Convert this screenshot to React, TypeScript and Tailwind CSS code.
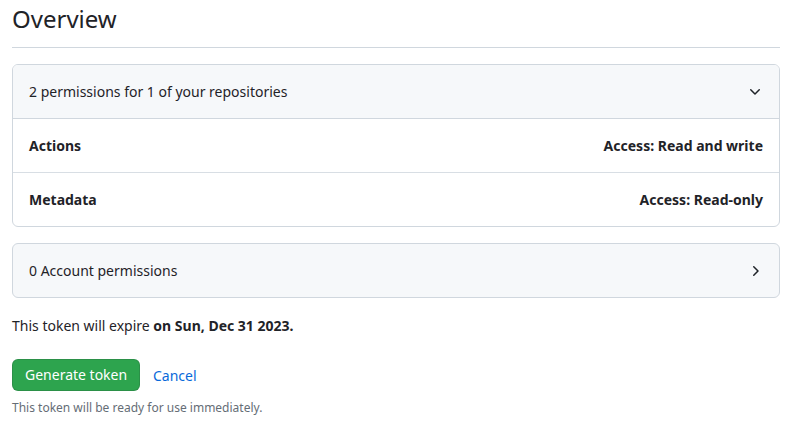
import React from "react";

function ChevronDown() {
  return (
    <svg width="16" height="16" viewBox="0 0 16 16" fill="#1f2328">
      <path d="M12.78 5.22a.749.749 0 0 1 0 1.06l-4.25 4.25a.749.749 0 0 1-1.06 0L3.22 6.28a.749.749 0 1 1 1.06-1.06L8 8.939l3.72-3.719a.749.749 0 0 1 1.06 0Z" />
    </svg>
  );
}

function ChevronRight() {
  return (
    <svg width="16" height="16" viewBox="0 0 16 16" fill="#1f2328">
      <path d="M6.22 3.22a.75.75 0 0 1 1.06 0l4.25 4.25a.75.75 0 0 1 0 1.06l-4.25 4.25a.751.751 0 0 1-1.042-.018.751.751 0 0 1-.018-1.042L9.94 8 6.22 4.28a.75.75 0 0 1 0-1.06Z" />
    </svg>
  );
}

export default function App() {
  return (
    <div
      className="bg-white text-[#1f2328] w-[787px] h-[423px] overflow-hidden"
      style={{ fontFamily: '"Noto Sans", "Liberation Sans", sans-serif' }}
    >
      <div className="ml-[12px] w-[768px]">
        <h2 className="text-[24px] leading-[36px] font-normal pt-[1px] pb-[10px] border-b border-[#d0d7de]">
          Overview
        </h2>
        <div className="mt-[16px] border border-[#d0d7de] rounded-[6px] overflow-hidden">
          <div className="bg-[#f6f8fa] flex items-center justify-between px-[16px] py-[16px] border-b border-[#d0d7de] text-[14px] leading-[21px]">
            <span>2 permissions for 1 of your repositories</span>
            <ChevronDown />
          </div>
          <div className="flex items-center justify-between px-[16px] py-[16px] border-b border-[#d8dee4] text-[14px] leading-[21px] font-bold">
            <span>Actions</span>
            <span>Access: Read and write</span>
          </div>
          <div className="flex items-center justify-between px-[16px] py-[16px] text-[14px] leading-[21px] font-bold">
            <span>Metadata</span>
            <span>Access: Read-only</span>
          </div>
        </div>
        <div className="mt-[16px] border border-[#d0d7de] rounded-[6px] bg-[#f6f8fa] flex items-center justify-between px-[16px] py-[16px] text-[14px] leading-[21px]">
          <span>0 Account permissions</span>
          <ChevronRight />
        </div>
        <p className="mt-[17px] text-[14px] leading-[21px]">
          This token will expire <strong className="font-bold">on Sun, Dec 31 2023.</strong>
        </p>
        <div className="mt-[23px] flex items-center">
          <button className="h-[32px] px-[12px] w-[128px] whitespace-nowrap rounded-[6px] bg-[#2da44e] border border-[rgba(31,35,40,0.15)] text-white text-[14px] font-normal leading-[20px]">
            Generate token
          </button>
          <a className="ml-[13px] text-[14px] text-[#0969da] leading-[21px]">Cancel</a>
        </div>
        <p className="mt-[8px] text-[12px] leading-[18px] text-[#656d76]">
          This token will be ready for use immediately.
        </p>
      </div>
    </div>
  );
}
